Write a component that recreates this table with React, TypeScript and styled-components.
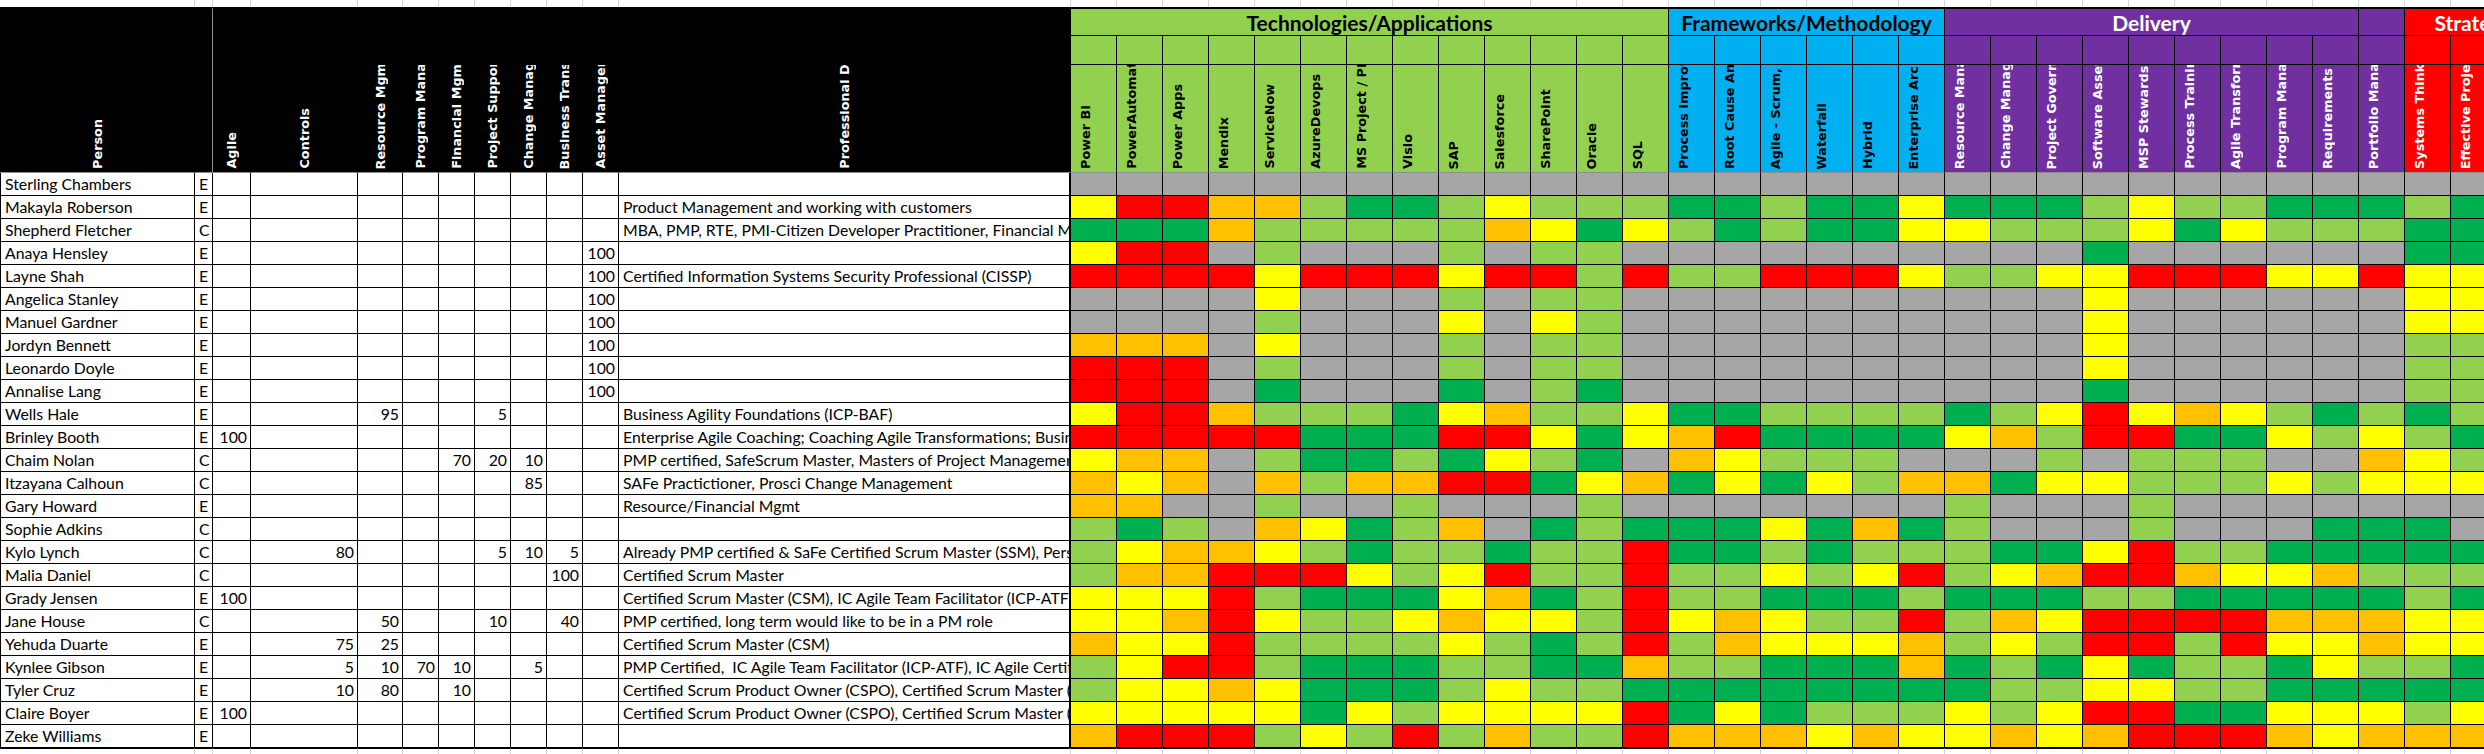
import React from 'react';
import styled, { createGlobalStyle } from 'styled-components';

const GlobalStyle = createGlobalStyle`
  html, body {
    margin: 0;
    padding: 0;
    background: #ffffff;
    overflow: hidden;
  }
`;

// column widths of the frozen (left) part of the sheet
const LEFT_WIDTHS = [195, 18, 38, 107, 45, 36, 36, 36, 36, 36, 36, 452];
const RIGHT_COUNT = 32;
const CELL_W = 46;

const FILL: Record<string, string> = {
  G: '#92D050',
  D: '#00B050',
  Y: '#FFFF00',
  O: '#FFC000',
  R: '#FF0000',
  X: '#A6A6A6',
};

type Group = { title: string; span: number; bg: string; fg: string; labels: string[] };

const GROUPS: Group[] = [
  {
    title: 'Technologies/Applications',
    span: 13,
    bg: '#92D050',
    fg: '#000000',
    labels: ['Power BI', 'PowerAutomate', 'Power Apps', 'Mendix', 'ServiceNow', 'AzureDevops', 'MS Project / PPM', 'Visio', 'SAP', 'Salesforce', 'SharePoint', 'Oracle', 'SQL'],
  },
  {
    title: 'Frameworks/Methodology',
    span: 6,
    bg: '#00B0F0',
    fg: '#000000',
    labels: ['Process Improvement', 'Root Cause Analysis', 'Agile - Scrum, Kanban', 'Waterfall', 'Hybrid', 'Enterprise Architecture'],
  },
  {
    title: 'Delivery',
    span: 9,
    bg: '#7030A0',
    fg: '#ffffff',
    labels: ['Resource Management', 'Change Management', 'Project Governance', 'Software Asset Management', 'MSP Stewardship', 'Process Training', 'Agile Transformation', 'Program Management', 'Requirements'],
  },
  { title: '', span: 1, bg: '#7030A0', fg: '#ffffff', labels: ['Portfolio Management'] },
  {
    title: 'Strategy',
    span: 3,
    bg: '#FF0000',
    fg: '#ffffff',
    labels: ['Systems Thinking', 'Effective Project Management', 'Stakeholder Management'],
  },
];

const LEFT_LABELS = ['Person', '', 'Agile', 'Controls', 'Resource Mgmt', 'Program Management', 'Financial Mgmt', 'Project Support', 'Change Management', 'Business Transformation', 'Asset Management', 'Professional Development'];

type Person = { name: string; kind: string; alloc: Record<number, number>; note: string; scores: string };

const PEOPLE: Person[] = [
  { name: 'Sterling Chambers', kind: 'E', alloc: {}, note: '', scores: 'X'.repeat(31) },
  { name: 'Makayla Roberson', kind: 'E', alloc: {}, note: 'Product Management and working with customers', scores: 'YRROOGDDGYGGG' + 'DD' + 'GDDY' + 'DDDGYGGDDD' + 'GD' },
  { name: 'Shepherd Fletcher', kind: 'C', alloc: {}, note: 'MBA, PMP, RTE, PMI-Citizen Developer Practitioner, Financial Modeling', scores: 'DDDOGGGGGOYDY' + 'GD' + 'GDDY' + 'YGGGYDYGGG' + 'DD' },
  { name: 'Anaya Hensley', kind: 'E', alloc: { 8: 100 }, note: '', scores: 'YRRXGXXXGXGGX' + 'XX' + 'XXXX' + 'XXXDXXXXXX' + 'DD' },
  { name: 'Layne Shah', kind: 'E', alloc: { 8: 100 }, note: 'Certified Information Systems Security Professional (CISSP)', scores: 'RRRRYRRRYRRGR' + 'GG' + 'RRRY' + 'GGYYRRRYYR' + 'YY' },
  { name: 'Angelica Stanley', kind: 'E', alloc: { 8: 100 }, note: '', scores: 'XXXXYXXXGXGGX' + 'XX' + 'XXXX' + 'XXXYXXXXXX' + 'YY' },
  { name: 'Manuel Gardner', kind: 'E', alloc: { 8: 100 }, note: '', scores: 'XXXXGXXXYXYGX' + 'XX' + 'XXXX' + 'XXXYXXXXXX' + 'YY' },
  { name: 'Jordyn Bennett', kind: 'E', alloc: { 8: 100 }, note: '', scores: 'OOOXYXXXGXGGX' + 'XX' + 'XXXX' + 'XXXYXXXXXX' + 'GG' },
  { name: 'Leonardo Doyle', kind: 'E', alloc: { 8: 100 }, note: '', scores: 'RRRXGXXXGXGGX' + 'XX' + 'XXXX' + 'XXXYXXXXXX' + 'GG' },
  { name: 'Annalise Lang', kind: 'E', alloc: { 8: 100 }, note: '', scores: 'RRRXDXXXDXGDX' + 'XX' + 'XXXX' + 'XXXDXXXXXX' + 'GG' },
  { name: 'Wells Hale', kind: 'E', alloc: { 2: 95, 5: 5 }, note: 'Business Agility Foundations (ICP-BAF)', scores: 'YRROGGGDYOGGY' + 'DD' + 'GGGG' + 'DGYRYOYGDG' + 'DG' },
  { name: 'Brinley Booth', kind: 'E', alloc: { 0: 100 }, note: 'Enterprise Agile Coaching; Coaching Agile Transformations; Business Agility', scores: 'RRRRRDDDRRYDY' + 'OR' + 'DDDD' + 'YOGRRDDYGY' + 'GD' },
  { name: 'Chaim Nolan', kind: 'C', alloc: { 4: 70, 5: 20, 6: 10 }, note: 'PMP certified, SafeScrum Master, Masters of Project Management', scores: 'YOOXGDDGDYGDX' + 'OY' + 'GGGX' + 'XXGXGGGXXO' + 'YG' },
  { name: 'Itzayana Calhoun', kind: 'C', alloc: { 6: 85 }, note: 'SAFe Practictioner, Prosci Change Management', scores: 'OYOXOGOORRDYO' + 'DY' + 'DYGO' + 'ODYYGGGYGY' + 'YY' },
  { name: 'Gary Howard', kind: 'E', alloc: {}, note: 'Resource/Financial Mgmt', scores: 'OOXXGXXGXXXGX' + 'XX' + 'XXXX' + 'GXXXGXXXXX' + 'XX' },
  { name: 'Sophie Adkins', kind: 'C', alloc: {}, note: '', scores: 'GDGXOYDGOXDGD' + 'DD' + 'YDOD' + 'GXXXGXXXDD' + 'DX' },
  { name: 'Kylo Lynch', kind: 'C', alloc: { 1: 80, 5: 5, 6: 10, 7: 5 }, note: 'Already PMP certified & SaFe Certified Scrum Master (SSM), Personal Agility', scores: 'GYOOYGDGGDGGR' + 'DD' + 'GDGG' + 'GDDYRGGDDD' + 'DD' },
  { name: 'Malia Daniel', kind: 'C', alloc: { 7: 100 }, note: 'Certified Scrum Master', scores: 'GOORRRYGYRGGR' + 'GG' + 'YGYR' + 'GYORROYYOG' + 'GG' },
  { name: 'Grady Jensen', kind: 'E', alloc: { 0: 100 }, note: 'Certified Scrum Master (CSM), IC Agile Team Facilitator (ICP-ATF), IC Agile Coach', scores: 'YYYRGDDDYODGR' + 'GG' + 'DDDG' + 'DDDGGDDDDD' + 'GD' },
  { name: 'Jane House', kind: 'C', alloc: { 2: 50, 5: 10, 7: 40 }, note: 'PMP certified, long term would like to be in a PM role', scores: 'YYORYGGYOYYGR' + 'YO' + 'YGGR' + 'GOYRRRROOO' + 'YY' },
  { name: 'Yehuda Duarte', kind: 'E', alloc: { 1: 75, 2: 25 }, note: 'Certified Scrum Master (CSM)', scores: 'OYYRGGGGYGDGR' + 'GO' + 'YYYO' + 'GYGRRGRYYO' + 'YY' },
  { name: 'Kynlee Gibson', kind: 'E', alloc: { 1: 5, 2: 10, 3: 70, 4: 10, 6: 5 }, note: 'PMP Certified,  IC Agile Team Facilitator (ICP-ATF), IC Agile Certified Professional', scores: 'GYRRGDDDGGDDO' + 'GG' + 'DDDO' + 'DGDYDGGDYG' + 'GD' },
  { name: 'Tyler Cruz', kind: 'E', alloc: { 1: 10, 2: 80, 4: 10 }, note: 'Certified Scrum Product Owner (CSPO), Certified Scrum Master (CSM)', scores: 'GYYOYDDDGYGGD' + 'DD' + 'DDDD' + 'DGGYYGGDDD' + 'DD' },
  { name: 'Claire Boyer', kind: 'E', alloc: { 0: 100 }, note: 'Certified Scrum Product Owner (CSPO), Certified Scrum Master (CSM)', scores: 'YYYYYDYGYYYYR' + 'DY' + 'DGGG' + 'YGYRRDDYYY' + 'GY' },
  { name: 'Zeke Williams', kind: 'E', alloc: {}, note: '', scores: 'ORRRGYGRGOGGR' + 'OO' + 'OYOY' + 'YOYORRROYO' + 'OO' },
];

const Sheet = styled.div`
  display: grid;
  grid-template-columns: ${LEFT_WIDTHS.map((w) => `${w}px`).join(' ')} repeat(${RIGHT_COUNT}, ${CELL_W}px);
  grid-template-rows: 7px 29px 29px 108px repeat(25, 23px) 12px;
  width: max-content;
  font-family: Lato, 'Liberation Sans', sans-serif;
  color: #000;
`;

const GridLine = styled.div<{ $top?: boolean }>`
  box-sizing: border-box;
  border-right: 1px solid #d4d4d4;
  border-top: ${(p) => (p.$top ? '1px solid #000' : 'none')};
`;

const DarkHead = styled.div<{ $freeze?: boolean }>`
  grid-row: span 3;
  box-sizing: border-box;
  background: #000;
  border-top: 2px solid #000;
  border-bottom: 1px solid #8e8e8e;
  border-right: 1px solid ${(p) => (p.$freeze ? '#8e8e8e' : '#000')};
  display: flex;
  flex-direction: column;
  justify-content: flex-end;
`;

const DarkLabelBox = styled.div`
  height: 107px;
  overflow: hidden;
  display: flex;
  align-items: flex-end;
  justify-content: center;
`;

const VText = styled.span<{ $color: string }>`
  writing-mode: vertical-rl;
  transform: rotate(180deg);
  white-space: nowrap;
  font-family: 'DejaVu Sans', Verdana, sans-serif;
  font-weight: bold;
  font-size: 12.8px;
  line-height: 15px;
  color: ${(p) => p.$color};
  margin-bottom: 3px;
`;

const GroupTitle = styled.div<{ $span: number; $bg: string; $fg: string }>`
  grid-column: span ${(p) => p.$span};
  box-sizing: border-box;
  background: ${(p) => p.$bg};
  color: ${(p) => p.$fg};
  border-top: 2px solid #000;
  border-right: 1px solid #000;
  border-bottom: 1px solid #000;
  display: flex;
  align-items: center;
  justify-content: center;
  font-family: Lato, 'Liberation Sans', sans-serif;
  font-weight: 700;
  font-size: 21px;
  white-space: nowrap;
  overflow: hidden;
`;

const BlankHead = styled.div<{ $bg: string }>`
  box-sizing: border-box;
  background: ${(p) => p.$bg};
  border-right: 1px solid #000;
  border-bottom: 1px solid #000;
`;

const LabelHead = styled.div<{ $bg: string }>`
  box-sizing: border-box;
  background: ${(p) => p.$bg};
  border-right: 1px solid #000;
  border-bottom: 1px solid #8e8e8e;
  display: flex;
  align-items: flex-end;
  padding-left: 7px;
  overflow: hidden;
`;

const TextCell = styled.div<{ $right?: boolean; $edge?: boolean; $heavy?: boolean }>`
  box-sizing: border-box;
  border-right: ${(p) => (p.$heavy ? '2px' : '1px')} solid #000;
  border-bottom: 1px solid #000;
  border-left: ${(p) => (p.$edge ? '1px solid #000' : 'none')};
  font-size: 15.8px;
  line-height: 22px;
  padding: 0 ${(p) => (p.$right ? '3px' : '0')} 0 ${(p) => (p.$right ? '0' : '4px')};
  text-align: ${(p) => (p.$right ? 'right' : 'left')};
  white-space: pre;
  overflow: hidden;
`;

const ScoreCell = styled.div<{ $bg: string }>`
  box-sizing: border-box;
  background: ${(p) => p.$bg};
  border-right: 1px solid #000;
  border-bottom: 1px solid #000;
`;

function groupOf(i: number): Group {
  let n = 0;
  for (const g of GROUPS) {
    n += g.span;
    if (i < n) return g;
  }
  return GROUPS[GROUPS.length - 1];
}

const RIGHT_LABELS = GROUPS.flatMap((g) => g.labels);
const TOTAL_COLS = LEFT_WIDTHS.length + RIGHT_COUNT;

export default function App() {
  return (
    <>
      <GlobalStyle />
      <Sheet>
        {Array.from({ length: TOTAL_COLS }, (_, i) => (
          <GridLine key={`top-${i}`} />
        ))}

        {LEFT_LABELS.map((label, i) => (
          <DarkHead key={`lh-${i}`} $freeze={i === 1}>
            <DarkLabelBox>
              {label && <VText $color="#ffffff">{label}</VText>}
            </DarkLabelBox>
          </DarkHead>
        ))}
        {GROUPS.map((g, i) => (
          <GroupTitle key={`g-${i}`} $span={g.span} $bg={g.bg} $fg={g.fg}>
            {g.title}
          </GroupTitle>
        ))}

        {Array.from({ length: RIGHT_COUNT }, (_, i) => (
          <BlankHead key={`b-${i}`} $bg={groupOf(i).bg} />
        ))}

        {Array.from({ length: RIGHT_COUNT }, (_, i) => (
          <LabelHead key={`l-${i}`} $bg={groupOf(i).bg}>
            <VText $color={groupOf(i).fg}>{RIGHT_LABELS[i]}</VText>
          </LabelHead>
        ))}

        {PEOPLE.map((p) => (
          <React.Fragment key={p.name}>
            <TextCell $edge>{p.name}</TextCell>
            <TextCell>{p.kind}</TextCell>
            {Array.from({ length: 9 }, (_, k) => (
              <TextCell key={k} $right>
                {p.alloc[k] ?? ''}
              </TextCell>
            ))}
            <TextCell $heavy>{p.note}</TextCell>
            {(p.scores + 'X').split('').map((s, k) => (
              <ScoreCell key={k} $bg={FILL[s]} />
            ))}
          </React.Fragment>
        ))}

        {Array.from({ length: TOTAL_COLS }, (_, i) => (
          <GridLine key={`bottom-${i}`} $top />
        ))}
      </Sheet>
    </>
  );
}
